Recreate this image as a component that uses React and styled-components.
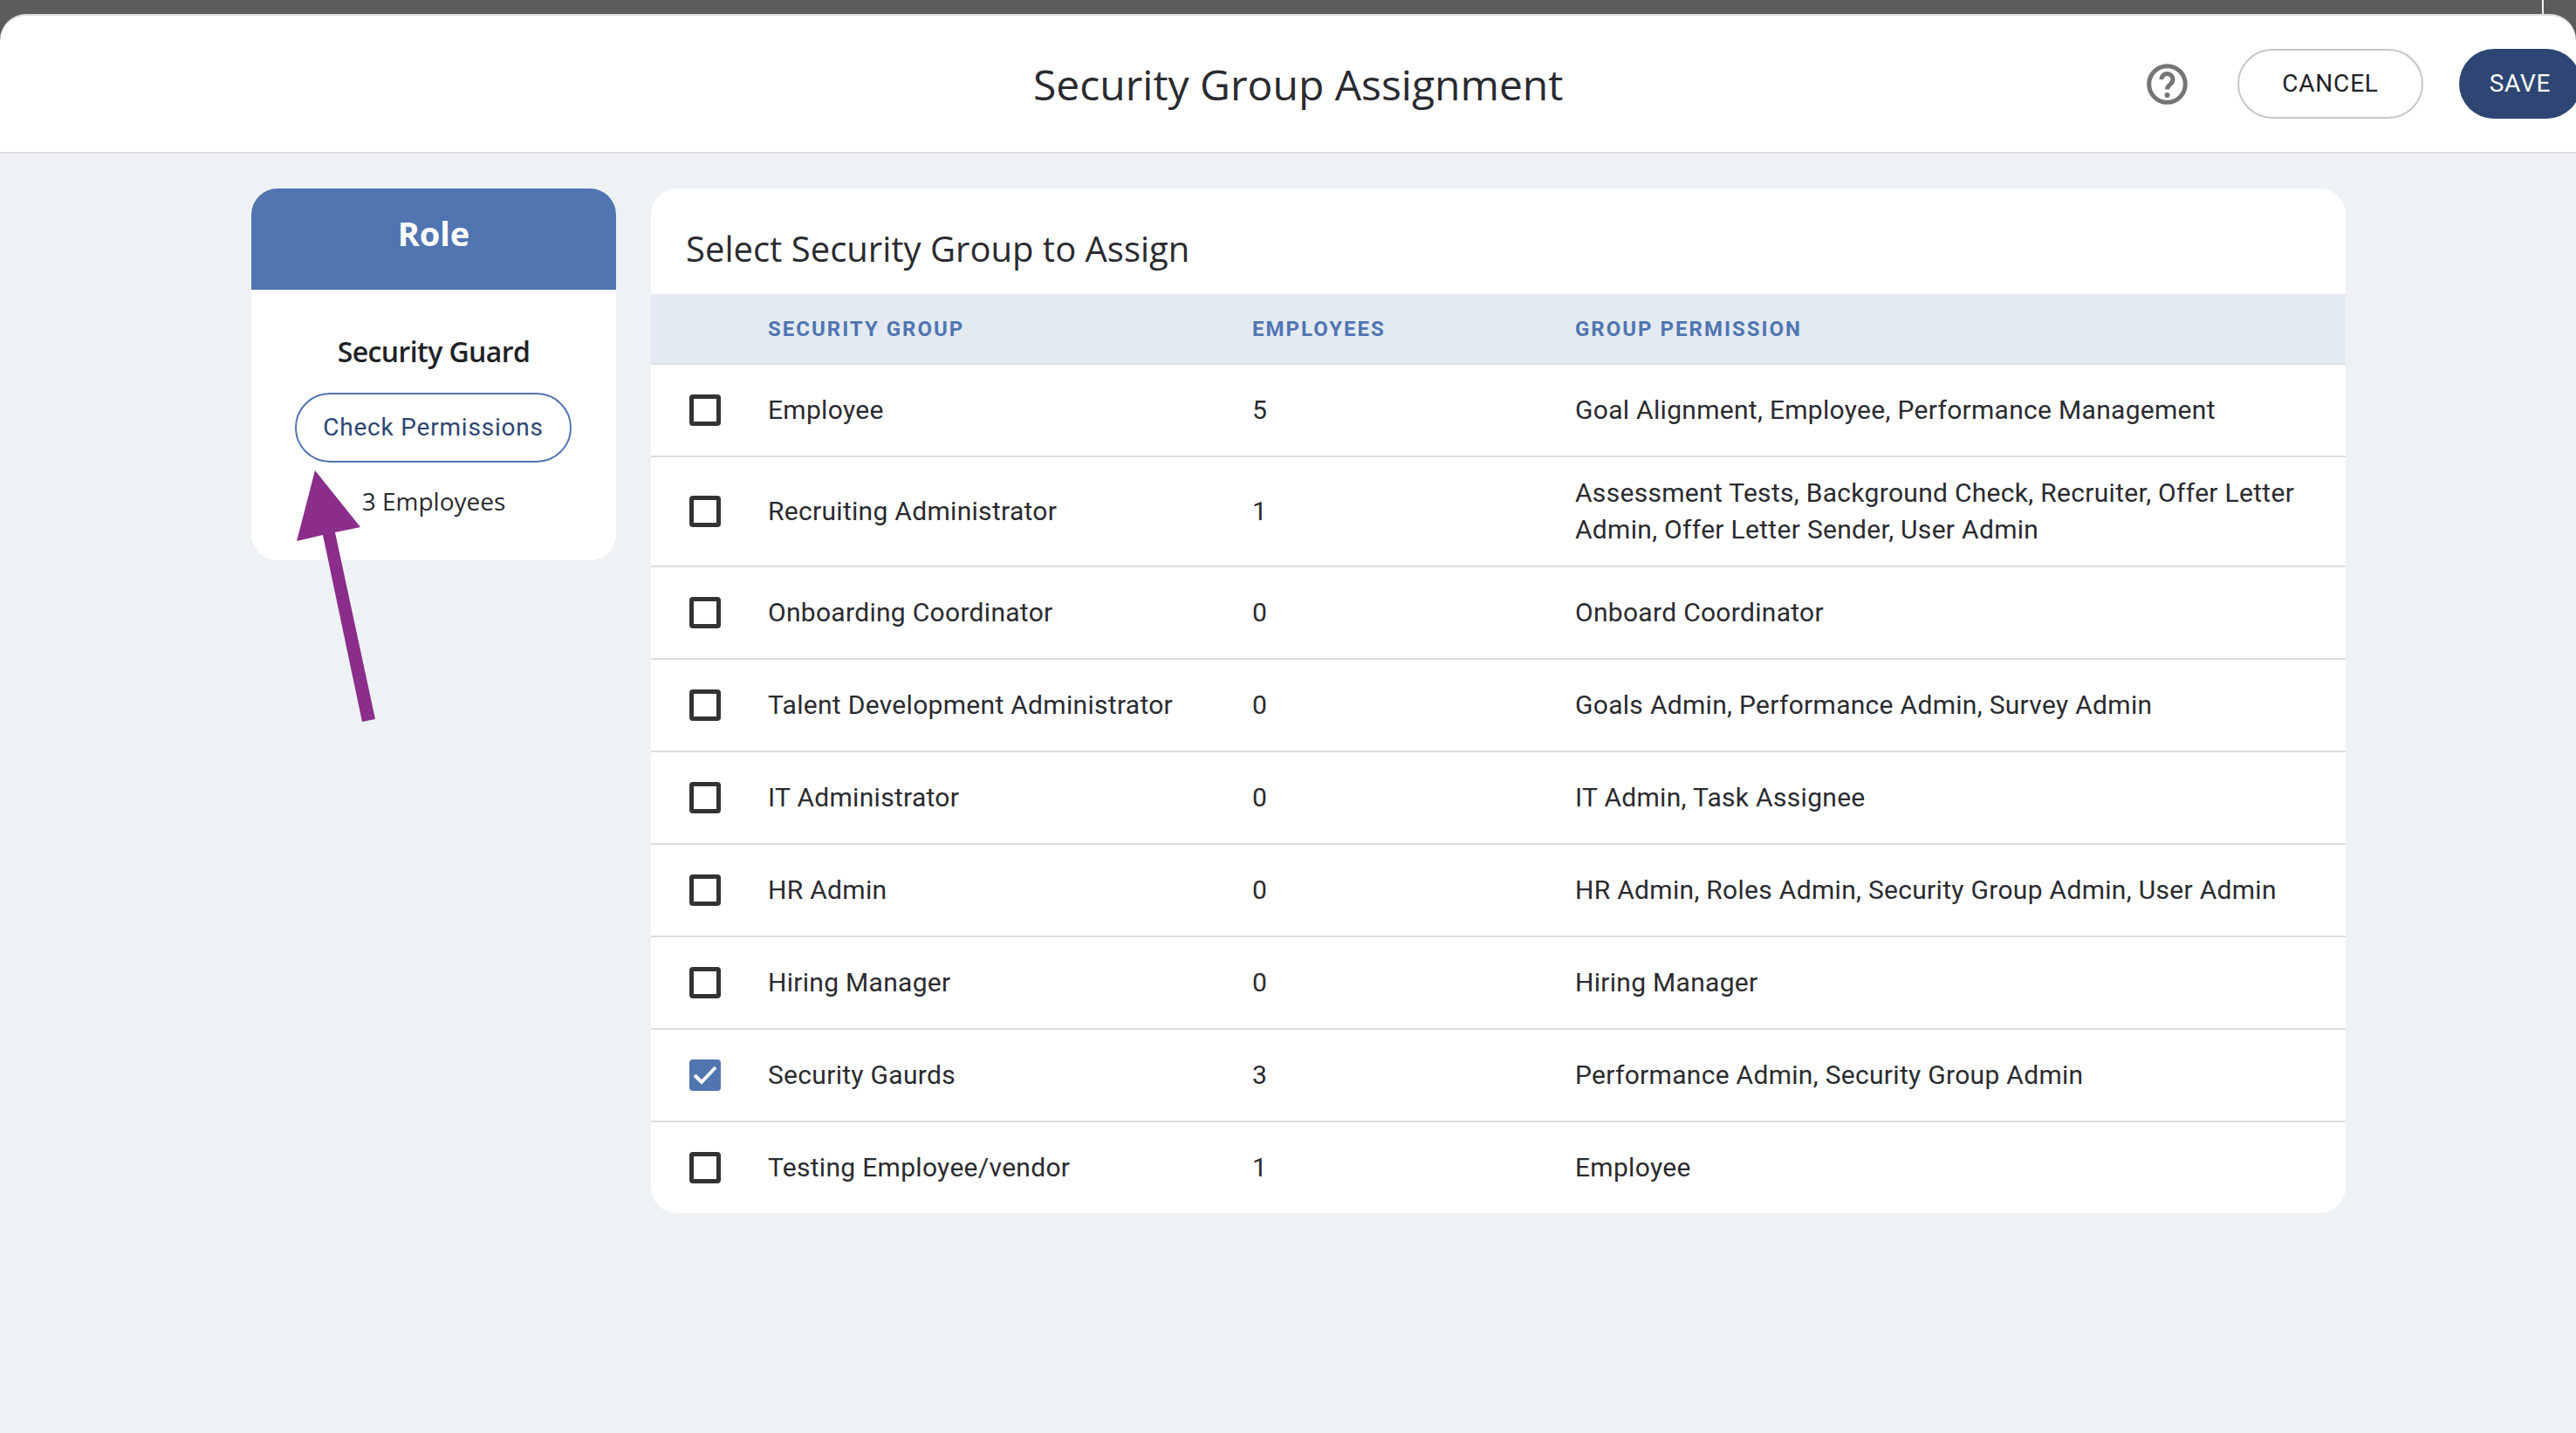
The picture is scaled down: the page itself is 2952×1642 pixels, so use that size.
import React from 'react';
import styled, { createGlobalStyle } from 'styled-components';

const rows = [
  { name: 'Employee', count: 5, permissions: 'Goal Alignment, Employee, Performance Management' },
  { name: 'Recruiting Administrator', count: 1, permissions: 'Assessment Tests, Background Check, Recruiter, Offer Letter Admin, Offer Letter Sender, User Admin' },
  { name: 'Onboarding Coordinator', count: 0, permissions: 'Onboard Coordinator' },
  { name: 'Talent Development Administrator', count: 0, permissions: 'Goals Admin, Performance Admin, Survey Admin' },
  { name: 'IT Administrator', count: 0, permissions: 'IT Admin, Task Assignee' },
  { name: 'HR Admin', count: 0, permissions: 'HR Admin, Roles Admin, Security Group Admin, User Admin' },
  { name: 'Hiring Manager', count: 0, permissions: 'Hiring Manager' },
  { name: 'Security Gaurds', count: 3, permissions: 'Performance Admin, Security Group Admin', checked: true },
  { name: 'Testing Employee/vendor', count: 1, permissions: 'Employee' },
];

const GlobalStyle = createGlobalStyle`
  html, body {
    margin: 0;
    background: #eef2f5;
  }
  * {
    box-sizing: border-box;
  }
`;

const Page = styled.div`
  display: flex;
  flex-direction: column;
  height: 100vh;
  overflow: hidden;
  background: #eef2f5;
  font-family: Roboto, sans-serif;
  color: #2a2b2f;
`;

const TopBar = styled.div`
  flex: 0 0 16px;
  display: flex;
  justify-content: flex-end;
  padding-right: 37px;
  background: #5b5c5e;
`;

const WindowEdge = styled.div`
  width: 2px;
  background: #f2f2f2;
`;

const HeaderBack = styled.div`
  background: #5b5c5e;
`;

const Header = styled.header`
  display: flex;
  align-items: center;
  height: 160px;
  padding-left: 1184px;
  background: #fff;
  border-top: 2px solid #dcdddf;
  border-bottom: 2px solid #dcdddf;
  border-radius: 30px 30px 0 0;
`;

const Title = styled.h1`
  margin: 2px auto 0 0;
  font-family: "Open Sans", sans-serif;
  font-size: 48px;
  font-weight: 400;
  line-height: 64px;
`;

const HelpIcon = styled.svg`
  flex: none;
  width: 47px;
  height: 47px;
  color: #757575;
`;

const Actions = styled.div`
  display: flex;
  align-items: center;
  gap: 41px;
  margin: 0 -6px 0 57px;
`;

const PillButton = styled.button`
  height: 80px;
  width: ${p => (p.$primary ? 140 : 213)}px;
  padding: 0 0 2px;
  border-radius: 40px;
  border: ${p => (p.$primary ? 'none' : '2px solid #c6c6c6')};
  background: ${p => (p.$primary ? '#2d4673' : '#fff')};
  color: ${p => (p.$primary ? '#fff' : '#212226')};
  font-family: Roboto, sans-serif;
  font-size: 28px;
  font-weight: 400;
  letter-spacing: 0.8px;
`;

const Content = styled.main`
  display: flex;
  align-items: flex-start;
  gap: 40px;
  padding: 40px 0 0 288px;
`;

const Sidebar = styled.aside`
  position: relative;
  flex: 0 0 418px;
`;

const RoleCard = styled.div`
  height: 426px;
  display: flex;
  flex-direction: column;
  align-items: center;
  background: #fff;
  border-radius: 30px;
  overflow: hidden;
`;

const RoleHeading = styled.div`
  align-self: stretch;
  height: 116px;
  padding-top: 25px;
  background: #5075b1;
  color: #fff;
  text-align: center;
  font-family: "Open Sans", sans-serif;
  font-size: 38px;
  font-weight: 700;
  line-height: 52px;
`;

const RoleName = styled.div`
  margin-top: 49px;
  font-family: "Open Sans", sans-serif;
  font-size: 32px;
  font-weight: 600;
  letter-spacing: -0.6px;
  line-height: 44px;
  color: #212226;
`;

const CheckButton = styled.button`
  width: 317px;
  height: 80px;
  margin: 25px 1px 0 0;
  padding: 0 0 2px;
  background: #fff;
  border: 2px solid #5075b1;
  border-radius: 40px;
  color: #2d4673;
  font-family: Roboto, sans-serif;
  font-size: 28px;
  letter-spacing: 0.8px;
`;

const EmployeeCount = styled.div`
  margin-top: 25px;
  font-family: "Open Sans", sans-serif;
  font-size: 28px;
  line-height: 38px;
`;

const Arrow = styled.svg`
  position: absolute;
  left: 50px;
  top: 320px;
  width: 145px;
  height: 295px;
`;

const TableCard = styled.section`
  flex: 0 0 1942px;
  background: #fff;
  border-radius: 30px;
  overflow: hidden;
`;

const TableTitle = styled.h2`
  margin: 0;
  height: 121px;
  padding: 41px 0 0 40px;
  font-family: "Open Sans", sans-serif;
  font-size: 40px;
  font-weight: 400;
  line-height: 55px;
`;

const Row = styled.div`
  display: grid;
  grid-template-columns: 134px 555px 370px 1fr;
  align-items: center;
  min-height: ${p => (p.$head ? 81 : 106)}px;
  padding: 20px 40px 20px 0;
  font-size: 30px;
  line-height: 42px;
  letter-spacing: 0.3px;
  background: ${p => (p.$head ? '#e3eaf1' : '#fff')};
  border-bottom: 2px solid #dcdddf;
  &:last-child {
    min-height: 104px;
    border-bottom: none;
  }
`;

const HeadCell = styled.div`
  grid-column: ${p => p.$col};
  color: #5075b1;
  font-size: 24px;
  font-weight: 700;
  line-height: 32px;
  letter-spacing: 2px;
`;

const Box = styled.div`
  width: 36px;
  height: 36px;
  margin-left: 44px;
  border-radius: 4px;
  border: ${p => (p.$checked ? 'none' : '5px solid #333')};
  background: ${p => (p.$checked ? '#5075b1' : '#fff')};
`;

const CheckMark = styled.svg`
  display: block;
  width: 36px;
  height: 36px;
`;

export default function App() {
  return (
    <Page>
      <GlobalStyle />
      <TopBar>
        <WindowEdge />
      </TopBar>
      <HeaderBack>
        <Header>
          <Title>Security Group Assignment</Title>
          <HelpIcon viewBox="0 0 47 47">
            <circle cx="23.5" cy="23.5" r="20.8" fill="none" stroke="currentColor" strokeWidth="5" />
            <path d="M17 18a6.5 6.5 0 1 1 10.5 5.1c-2.4 1.9-4 3-4 6.4" fill="none" stroke="currentColor" strokeWidth="5" />
            <circle cx="23.5" cy="36" r="3" fill="currentColor" />
          </HelpIcon>
          <Actions>
            <PillButton>CANCEL</PillButton>
            <PillButton $primary>SAVE</PillButton>
          </Actions>
        </Header>
      </HeaderBack>
      <Content>
        <Sidebar>
          <RoleCard>
            <RoleHeading>Role</RoleHeading>
            <RoleName>Security Guard</RoleName>
            <CheckButton>Check Permissions</CheckButton>
            <EmployeeCount>3 Employees</EmployeeCount>
          </RoleCard>
          <Arrow viewBox="0 0 145 295">
            <polygon
              fill="#8b2d8b"
              points="23,3 75,68 46,74 92,288 77,291 32,77 2,84"
            />
          </Arrow>
        </Sidebar>
        <TableCard>
          <TableTitle>Select Security Group to Assign</TableTitle>
          <Row $head>
            <HeadCell $col={2}>SECURITY GROUP</HeadCell>
            <HeadCell $col={3}>EMPLOYEES</HeadCell>
            <HeadCell $col={4}>GROUP PERMISSION</HeadCell>
          </Row>
          {rows.map(row => (
            <Row key={row.name}>
              <Box $checked={row.checked}>
                {row.checked && (
                  <CheckMark viewBox="0 0 36 36">
                    <polyline points="6,18 14,26 30,9" fill="none" stroke="#fff" strokeWidth="4" />
                  </CheckMark>
                )}
              </Box>
              <div>{row.name}</div>
              <div>{row.count}</div>
              <div>{row.permissions}</div>
            </Row>
          ))}
        </TableCard>
      </Content>
    </Page>
  );
}
